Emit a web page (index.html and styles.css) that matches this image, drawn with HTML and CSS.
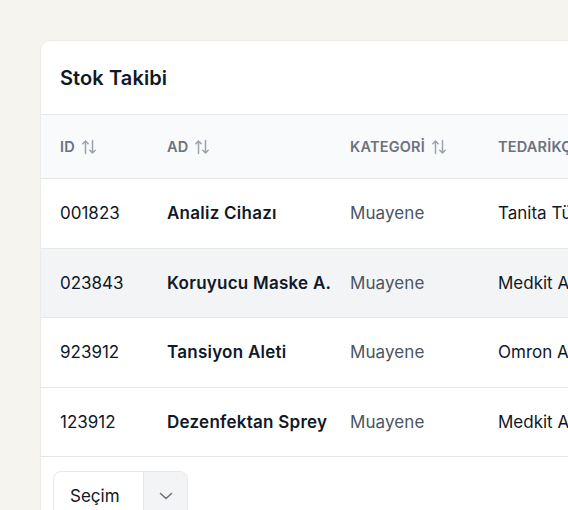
FILE: index.html
```html
<!DOCTYPE html>
<html>
<head>
<meta charset="utf-8">
<link rel="stylesheet" href="styles.css">
</head>
<body>
<div class="card">
  <div class="card-head">Stok Takibi</div>
  <table class="tbl">
    <colgroup><col class="c1"><col class="c2"><col class="c3"><col class="c4"></colgroup>
    <thead>
      <tr>
        <th><span class="hc">ID <svg class="sort" width="16" height="16" viewBox="0 0 16 16"><path d="M4.5 14.5V2 M1.8 4.8 L4.5 2 L7.2 4.8 M11.5 1.5V14 M8.8 11.2 L11.5 14 L14.2 11.2" fill="none" stroke="#9ca3af" stroke-width="1.5" stroke-linecap="round" stroke-linejoin="round"/></svg></span></th>
        <th><span class="hc">AD <svg class="sort" width="16" height="16" viewBox="0 0 16 16"><path d="M4.5 14.5V2 M1.8 4.8 L4.5 2 L7.2 4.8 M11.5 1.5V14 M8.8 11.2 L11.5 14 L14.2 11.2" fill="none" stroke="#9ca3af" stroke-width="1.5" stroke-linecap="round" stroke-linejoin="round"/></svg></span></th>
        <th><span class="hc">KATEGORİ <svg class="sort" width="16" height="16" viewBox="0 0 16 16"><path d="M4.5 14.5V2 M1.8 4.8 L4.5 2 L7.2 4.8 M11.5 1.5V14 M8.8 11.2 L11.5 14 L14.2 11.2" fill="none" stroke="#9ca3af" stroke-width="1.5" stroke-linecap="round" stroke-linejoin="round"/></svg></span></th>
        <th><span class="hc">TEDARİKÇİ <svg class="sort" width="16" height="16" viewBox="0 0 16 16"><path d="M4.5 14.5V2 M1.8 4.8 L4.5 2 L7.2 4.8 M11.5 1.5V14 M8.8 11.2 L11.5 14 L14.2 11.2" fill="none" stroke="#9ca3af" stroke-width="1.5" stroke-linecap="round" stroke-linejoin="round"/></svg></span></th>
      </tr>
    </thead>
    <tbody>
      <tr><td>001823</td><td class="b">Analiz Cihazı</td><td class="g">Muayene</td><td>Tanita Türkiye</td></tr>
      <tr class="hl"><td>023843</td><td class="b">Koruyucu Maske A.</td><td class="g">Muayene</td><td>Medkit A.Ş.</td></tr>
      <tr><td>923912</td><td class="b">Tansiyon Aleti</td><td class="g">Muayene</td><td>Omron A.Ş.</td></tr>
      <tr><td>123912</td><td class="b">Dezenfektan Sprey</td><td class="g">Muayene</td><td>Medkit A.Ş.</td></tr>
    </tbody>
  </table>
  <div class="foot">
    <div class="select">
      <span class="sel-label">Seçim</span>
      <span class="sel-btn"><svg width="16" height="16" viewBox="0 0 16 16"><path d="M2.5 5.5 L8 10.5 L13.5 5.5" fill="none" stroke="#6b7280" stroke-width="1.6" stroke-linecap="round" stroke-linejoin="round"/></svg></span>
    </div>
  </div>
</div>
</body>
</html>
```
FILE: styles.css
```css
html, body { margin: 0; padding: 0; }
body {
  background: #f5f4ef;
  font-family: Inter, "Noto Sans", sans-serif;
  width: 568px;
  height: 510px;
  overflow: hidden;
  padding: 40px 0 0 40px;
  box-sizing: border-box;
}
.card {
  width: 700px;
  background: #fff;
  border: 1px solid #ebebe8;
  border-radius: 10px;
  box-sizing: border-box;
  overflow: hidden;
}
.card-head {
  height: 73px;
  display: flex;
  align-items: center;
  padding-left: 19px;
  font-size: 20px;
  font-weight: 600;
  color: #111827;
  letter-spacing: 0.1px;
}
.tbl {
  border-collapse: collapse;
  table-layout: fixed;
  width: 100%;
}
.c1 { width: 106px; }
.c2 { width: 183px; }
.c3 { width: 148px; }
.tbl th {
  background: #f9fafb;
  height: 64px;
  box-sizing: border-box;
  text-align: left;
  padding: 0 0 0 19px;
  font-size: 14.5px;
  font-weight: 600;
  color: #6b7280;
  letter-spacing: 0.2px;
  border-top: 1px solid #e5e7eb;
  border-bottom: 1px solid #e5e7eb;
  white-space: nowrap;
}
.tbl th:not(:first-child), .tbl td:not(:first-child) { padding-left: 20px; }
.hc { display: inline-flex; align-items: center; gap: 6px; }
.sort { display: block; }
.tbl td {
  height: 69.5px;
  box-sizing: border-box;
  padding: 0 0 0 19px;
  font-size: 17px;
  color: #111827;
  border-bottom: 1px solid #e5e7eb;
  white-space: nowrap;
}
.tbl td.b { font-weight: 600; letter-spacing: 0.25px; }
.tbl td.g { color: #4b5563; letter-spacing: 0.1px; }
.tbl tr.hl td { background: #f3f4f6; }
.foot { padding: 14px 0 0 12px; height: 60px; }
.select {
  display: inline-flex;
  height: 50px;
  border: 1px solid #e5e7eb;
  border-radius: 8px;
  overflow: hidden;
}
.sel-label {
  width: 89px;
  padding-left: 16px;
  box-sizing: border-box;
  font-size: 17px;
  color: #111827;
  line-height: 48px;
}
.sel-btn {
  width: 43px;
  background: #f3f4f6;
  border-left: 1px solid #e5e7eb;
  display: flex;
  align-items: center;
  justify-content: center;
  height: 48px;
}
```
